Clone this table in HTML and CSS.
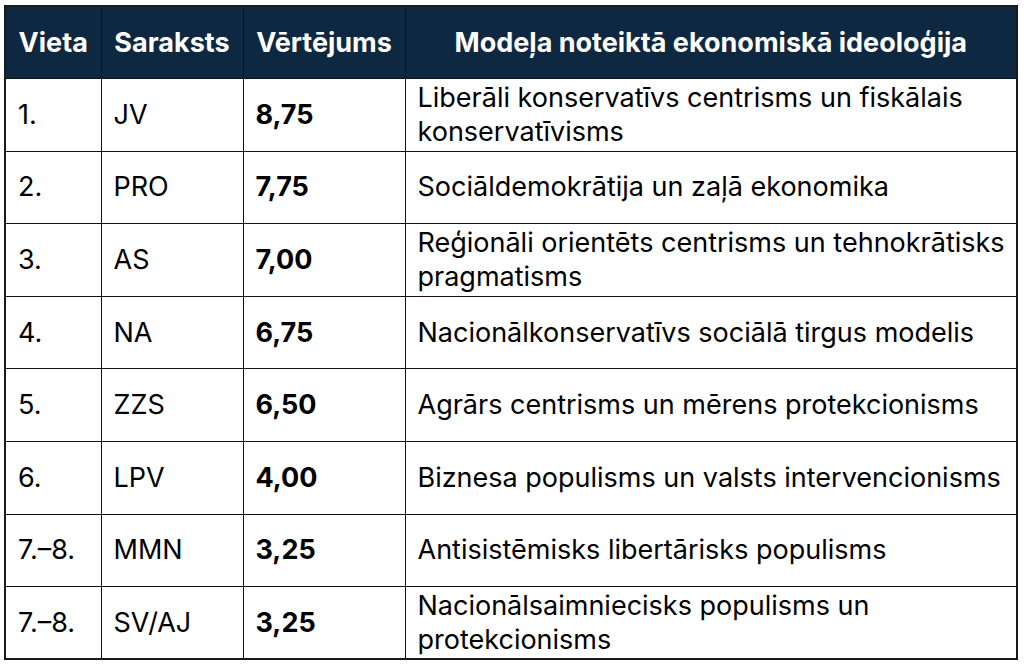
FILE: index.html
```html
<!DOCTYPE html>
<html lang="lv">
<head>
<meta charset="utf-8">
<title>Ekonomiskā ideoloģija</title>
<link rel="stylesheet" href="styles.css">
</head>
<body>
<table class="rank">
  <colgroup>
    <col class="c-place">
    <col class="c-list">
    <col class="c-score">
    <col class="c-ideo">
  </colgroup>
  <thead>
    <tr>
      <th>Vieta</th>
      <th>Saraksts</th>
      <th>Vērtējums</th>
      <th>Modeļa noteiktā ekonomiskā ideoloģija</th>
    </tr>
  </thead>
  <tbody>
    <tr><td>1.</td><td>JV</td><td class="score">8,75</td><td>Liberāli konservatīvs centrisms un fiskālais konservatīvisms</td></tr>
    <tr><td>2.</td><td>PRO</td><td class="score">7,75</td><td>Sociāldemokrātija un zaļā ekonomika</td></tr>
    <tr><td>3.</td><td>AS</td><td class="score">7,00</td><td>Reģionāli orientēts centrisms un tehnokrātisks pragmatisms</td></tr>
    <tr><td>4.</td><td>NA</td><td class="score">6,75</td><td>Nacionālkonservatīvs sociālā tirgus modelis</td></tr>
    <tr><td>5.</td><td>ZZS</td><td class="score">6,50</td><td>Agrārs centrisms un mērens protekcionisms</td></tr>
    <tr><td>6.</td><td>LPV</td><td class="score">4,00</td><td>Biznesa populisms un valsts intervencionisms</td></tr>
    <tr><td>7.–8.</td><td>MMN</td><td class="score">3,25</td><td>Antisistēmisks libertārisks populisms</td></tr>
    <tr><td>7.–8.</td><td>SV/AJ</td><td class="score">3,25</td><td>Nacionālsaimniecisks populisms un protekcionisms</td></tr>
  </tbody>
</table>
</body>
</html>
```

FILE: styles.css
```css
html, body {
  margin: 0;
  background: #ffffff;
}
body {
  padding: 5px 0 0 4px;
  font-family: Inter, "Liberation Sans", sans-serif;
  color: #000;
}
.rank {
  border-collapse: collapse;
  table-layout: fixed;
  width: 1012px;
  border: 2px solid #1a1a1a;
}
.c-place { width: 96px; }
.c-list { width: 142px; }
.c-score { width: 162px; }
.c-ideo { width: 612px; }
.rank th,
.rank td {
  border: 1px solid #111;
  height: 72.6px;
  box-sizing: border-box;
  padding: 0 6px 0 12px;
  vertical-align: middle;
  font-size: 27px;
  line-height: 34px;
  text-align: left;
}
.rank th {
  background: #0e2841;
  color: #fff;
  font-weight: 700;
  text-align: center;
  padding: 0 2px;
}
.rank td.score {
  font-weight: 700;
}
```
